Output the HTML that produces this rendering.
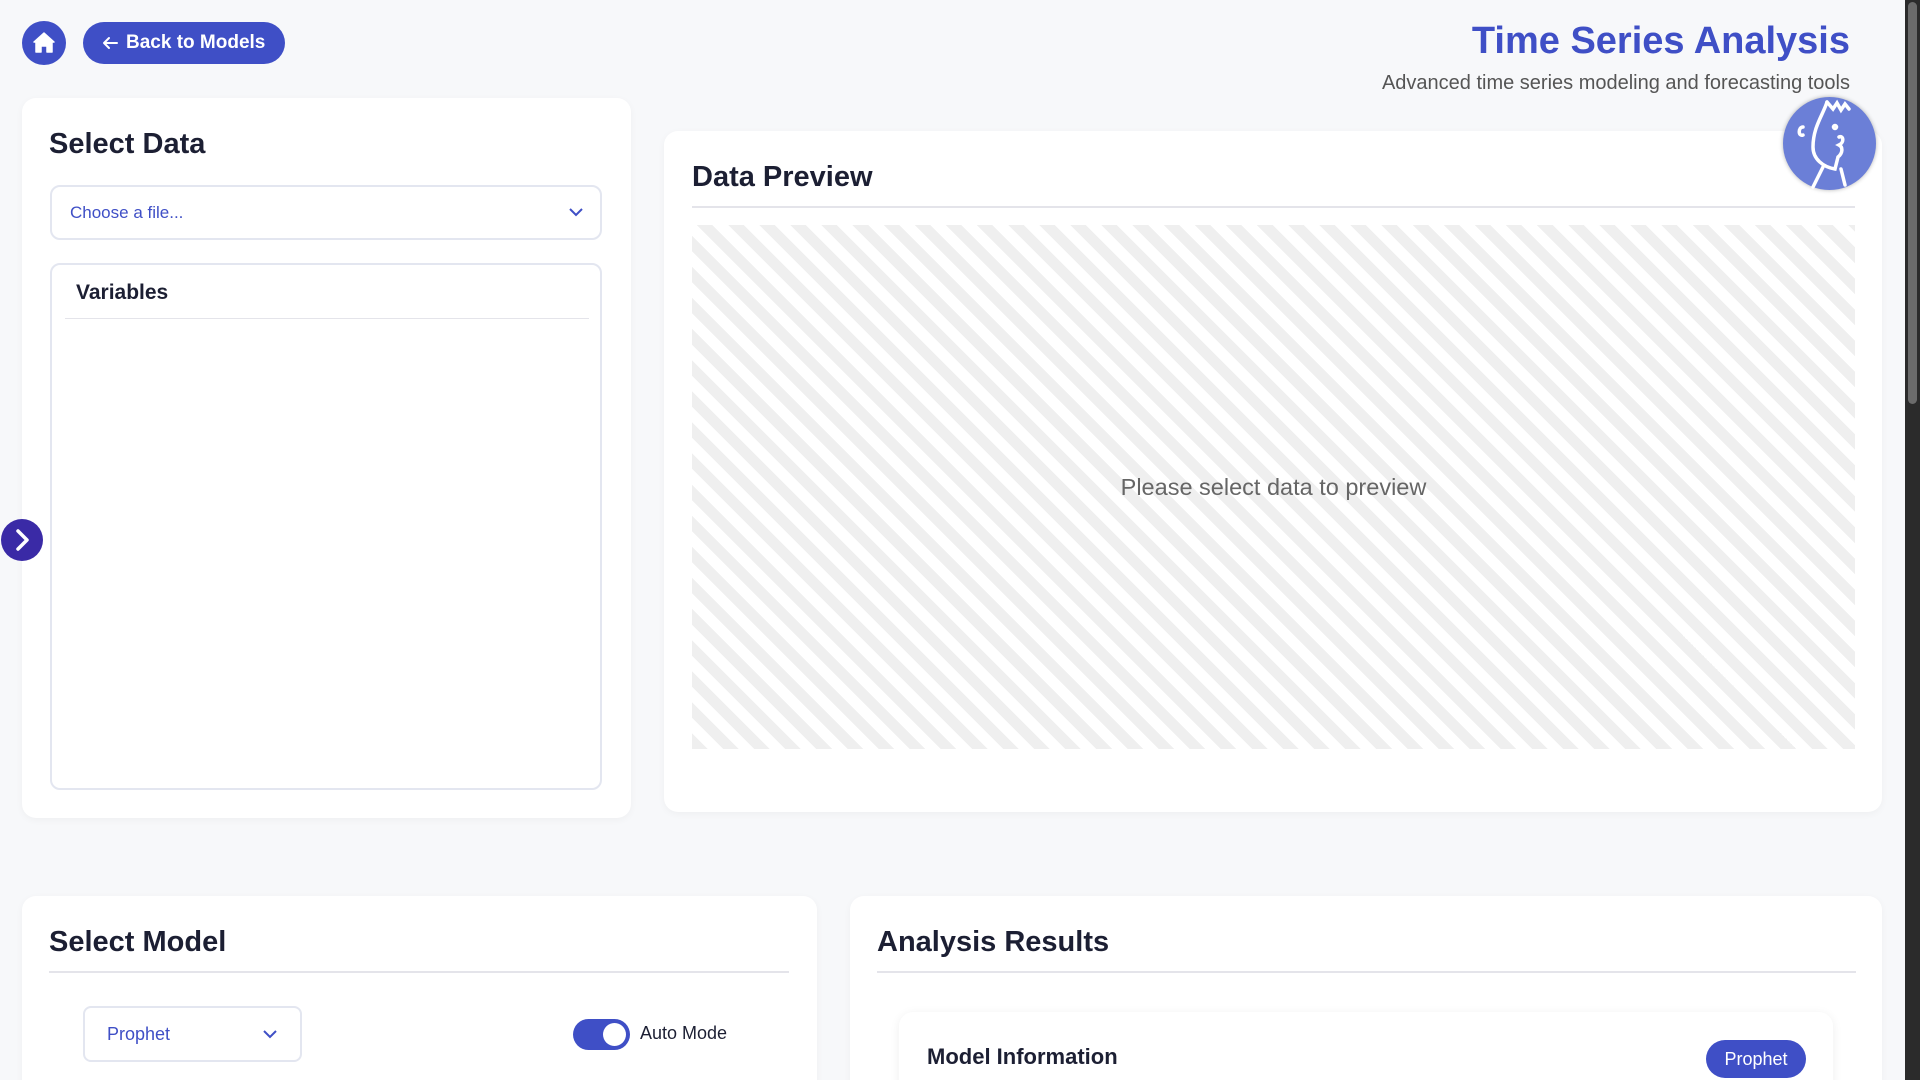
<!DOCTYPE html>
<html style="width:1920px;height:1080px;overflow:hidden"><head><meta charset="utf-8"><style>
*{box-sizing:border-box;margin:0;padding:0}
body{width:1920px;height:1080px;overflow:hidden;background:#f7f8fa;font-family:"Liberation Sans",sans-serif;position:relative;color:#1c1f33}
.card{position:absolute;background:#fff;border-radius:14px;box-shadow:0 2px 8px rgba(0,0,0,0.04)}
.h{position:absolute;font-weight:bold;font-size:29px;color:#1c1f33}
.div{position:absolute;height:2px;background:#e4e4ea}
</style></head><body>
<div style="position:absolute;left:22px;top:21px;width:44px;height:44px;border-radius:50%;background:#3f4fc6">
<svg width="44" height="44" viewBox="0 0 44 44"><path d="M22 12 L32 21 L30 21 L30 31 L25 31 L25 25 L19 25 L19 31 L14 31 L14 21 L12 21 Z" fill="#fff" stroke="#fff" stroke-width="1.5" stroke-linejoin="round"/></svg></div>
<div style="position:absolute;left:83px;top:22px;width:202px;height:42px;border-radius:21px;background:#3f4fc6;color:#fff;font-size:19px;font-weight:bold;line-height:42px;padding-left:43px">Back to Models
<svg style="position:absolute;left:18px;top:13px" width="18" height="16" viewBox="0 0 18 16"><path d="M16 8H3M8 3L3 8L8 13" stroke="#fff" stroke-width="2" fill="none" stroke-linecap="round" stroke-linejoin="round"/></svg></div>
<div style="position:absolute;right:70px;top:20px;font-size:38px;font-weight:bold;color:#3f4fc6">Time Series Analysis</div>
<div style="position:absolute;right:70px;top:72px;font-size:20px;color:#555">Advanced time series modeling and forecasting tools</div>

<div class="card" style="left:22px;top:98px;width:609px;height:720px"></div>
<div class="h" style="left:49px;top:128px">Select Data</div>
<div style="position:absolute;left:50px;top:185px;width:552px;height:55px;border:2px solid #e3e6f0;border-radius:10px;font-size:17px;color:#3f4fc6;line-height:51px;padding-left:18px">Choose a file...
<svg style="position:absolute;right:16px;top:19px" width="16" height="12" viewBox="0 0 16 12"><path d="M2 3L8 9L14 3" stroke="#3f4fc6" stroke-width="2" fill="none"/></svg></div>
<div style="position:absolute;left:50px;top:263px;width:552px;height:527px;border:2px solid #e3e6f0;border-radius:10px"></div>
<div style="position:absolute;left:76px;top:281px;font-size:21px;font-weight:bold">Variables</div>
<div class="div" style="left:65px;top:318px;width:524px;height:1px"></div>

<div style="position:absolute;left:1px;top:519px;width:42px;height:42px;border-radius:50%;background:#3a2aa6">
<svg width="42" height="42" viewBox="0 0 42 42"><path d="M17 12L26 21L17 30" stroke="#fff" stroke-width="3.5" fill="none" stroke-linecap="round" stroke-linejoin="round"/></svg></div>

<div class="card" style="left:664px;top:131px;width:1218px;height:681px"></div>
<div class="h" style="left:692px;top:161px">Data Preview</div>
<div class="div" style="left:692px;top:206px;width:1163px"></div>
<div style="position:absolute;left:692px;top:225px;width:1163px;height:524px;background:repeating-linear-gradient(45deg,#efefef 0 11px,#fff 11px 22px)"></div>
<div style="position:absolute;left:692px;top:474px;width:1163px;text-align:center;font-size:23.5px;color:#666">Please select data to preview</div>

<div style="position:absolute;left:1783px;top:97px;width:93px;height:93px;border-radius:50%;background:#6b7fd7;box-shadow:0 0 4px rgba(0,0,0,0.3)">
<svg width="93" height="93" viewBox="0 0 93 93"><g stroke="#fff" stroke-width="3.5" fill="none" stroke-linecap="round"><path d="M44 5 C40 18 30 30 30 50 C30 62 40 70 52 72 L55 60 C60 56 60 50 56 48 C62 45 60 38 56 40"/><path d="M44 5 L50 12 L54 6 L58 13 L62 7 L66 12"/><path d="M20 30 C15 30 15 40 20 38"/><circle cx="52" cy="30" r="1.5"/><path d="M40 70 L30 90"/><path d="M58 72 L62 88"/></g></svg></div>

<div class="card" style="left:22px;top:896px;width:795px;height:200px;border-radius:14px 14px 0 0"></div>
<div class="h" style="left:49px;top:926px">Select Model</div>
<div class="div" style="left:49px;top:971px;width:740px"></div>
<div style="position:absolute;left:83px;top:1006px;width:219px;height:56px;border:2px solid #e3e6f0;border-radius:8px;font-size:18px;color:#3f4fc6;line-height:52px;padding-left:22px">Prophet
<svg style="position:absolute;right:22px;top:20px" width="16" height="12" viewBox="0 0 16 12"><path d="M2 3L8 9L14 3" stroke="#3f4fc6" stroke-width="2" fill="none"/></svg></div>
<div style="position:absolute;left:573px;top:1019px;width:57px;height:31px;border-radius:16px;background:#3f4fc6"><div style="position:absolute;right:4px;top:4px;width:23px;height:23px;border-radius:50%;background:#fff"></div></div>
<div style="position:absolute;left:640px;top:1023px;font-size:18px;color:#1c1f33">Auto Mode</div>

<div class="card" style="left:850px;top:896px;width:1032px;height:200px;border-radius:14px 14px 0 0"></div>
<div class="h" style="left:877px;top:926px">Analysis Results</div>
<div class="div" style="left:877px;top:971px;width:979px"></div>
<div class="card" style="left:899px;top:1012px;width:934px;height:100px;box-shadow:0 2px 10px rgba(0,0,0,0.07)"></div>
<div style="position:absolute;left:927px;top:1044px;font-size:22px;font-weight:bold">Model Information</div>
<div style="position:absolute;left:1706px;top:1040px;width:100px;height:38px;border-radius:19px;background:#3f4fc6;color:#fff;font-size:18px;line-height:38px;text-align:center">Prophet</div>

<div style="position:absolute;left:1905px;top:0;width:15px;height:1080px;background:#2b2b2b"></div>
<div style="position:absolute;left:1908px;top:2px;width:9px;height:402px;border-radius:5px;background:#6b6b6b"></div>
</body></html>
